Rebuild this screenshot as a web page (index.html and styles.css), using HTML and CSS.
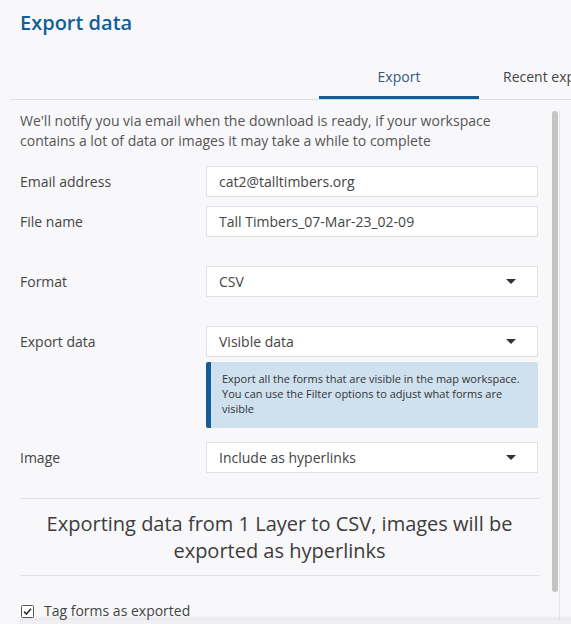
FILE: index.html
```html
<!DOCTYPE html>
<html lang="en">
<head>
    <meta charset="UTF-8">
    <title>Export data</title>
    <link rel="stylesheet" href="styles.css">
</head>
<body>
    <div class="modal">
        <h1 class="modal-title">Export data</h1>

        <!-- Tabs -->
        <ul class="tabs">
            <li class="tab tab-active">Export</li>
            <li class="tab">Recent exports</li>
        </ul>

        <!-- Export form -->
        <div class="panel">
            <div class="panel-body">
                <p class="intro">We'll notify you via email when the download is ready, if your workspace contains a lot of data or images it may take a while to complete</p>

                <div class="row">
                    <label class="row-label">Email address</label>
                    <div class="field">cat2@talltimbers.org</div>
                </div>
                <div class="row row-tight">
                    <label class="row-label">File name</label>
                    <div class="field">Tall Timbers_07-Mar-23_02-09</div>
                </div>

                <div class="row row-spaced">
                    <label class="row-label">Format</label>
                    <div class="field select">CSV <span class="caret"></span></div>
                </div>

                <div class="row row-spaced row-top">
                    <label class="row-label">Export data</label>
                    <div>
                        <div class="field select">Visible data <span class="caret"></span></div>
                        <div class="info">Export all the forms that are visible in the map workspace. You can use the Filter options to adjust what forms are visible</div>
                    </div>
                </div>

                <div class="row row-image">
                    <label class="row-label">Image</label>
                    <div class="field select">Include as hyperlinks <span class="caret"></span></div>
                </div>

                <div class="summary">Exporting data from 1 Layer to CSV, images will be exported as hyperlinks</div>

                <label class="check">
                    <svg class="check-box" width="13" height="13" viewBox="0 0 13 13">
                        <rect x="0.5" y="0.5" width="12" height="12" rx="1" fill="#fff" stroke="#555"/>
                        <path d="M3 6.6 L5.4 9 L10 3.8" fill="none" stroke="#333" stroke-width="1.6"/>
                    </svg>
                    Tag forms as exported
                </label>
            </div>
            <!-- scrollbar -->
            <div class="scrollbar"><div class="scroll-thumb"></div></div>
        </div>

        <div class="footer"></div>
    </div>
</body>
</html>
```

FILE: styles.css
```css
* { box-sizing: border-box; margin: 0; padding: 0; }
body {
    font-family: 'Open Sans', 'Noto Sans', sans-serif;
    font-size: 14px;
    line-height: 20px;
    background-color: #f8f8fa;
    color: #444;
    overflow: hidden;
}

.modal { width: 640px; }
.modal-title { padding: 10px 20px 0; font-size: 20px; line-height: 26px; font-weight: 600; color: #135e98; }

.tabs { display: flex; list-style: none; margin: 30px 0 0 10px; padding-left: 309px; border-bottom: 1px solid #dddde0; }
.tab { width: 160px; padding: 1px 24px 9px; border-bottom: 3px solid transparent; color: #444; white-space: nowrap; }
.tab-active { text-align: center; color: #34587c; border-bottom-color: #105d97; }

.panel { display: flex; margin: 10px 0 0 10px; width: 550px; height: 510px; overflow: hidden; border-right: 1px solid #e6e6e8; }
.panel-body { width: 540px; flex: none; padding: 1px 11px 29px 10px; }
.scrollbar { width: 9px; flex: none; padding: 1px 1px 0 2px; }
.scroll-thumb { height: 481px; background-color: #c4c4c4; border-radius: 3px; }

.intro { color: #555; }

.row { display: grid; grid-template-columns: 186px 332px; align-items: center; margin-top: 15px; }
.row-tight { margin-top: 9px; }
.row-spaced { margin-top: 29px; }
.row-top { align-items: start; }
.row-top .row-label { line-height: 31px; }
.row-image { margin-top: 14px; }
.row-label { color: #444; }

.field { height: 31px; padding: 5px 12px; background-color: #fff; border: 1px solid #e2e2e5; color: #444; }
.select { display: flex; justify-content: space-between; align-items: center; }
.caret { width: 0; height: 0; margin-right: 9px; border-left: 5px solid transparent; border-right: 5px solid transparent; border-top: 5px solid #333; }

.info { margin-top: 5px; padding: 9px 10px 12px 11px; background-color: #cfe1ef; border-left: 5px solid #105d97; border-radius: 2px; font-size: 11px; line-height: 15px; color: #333; }

.summary { margin-top: 25px; padding: 11px 0 11px; border-top: 1px solid #e2e2e5; border-bottom: 1px solid #e2e2e5; text-align: center; font-size: 20px; line-height: 27px; color: #3c3c3c; }

.check { display: flex; align-items: center; gap: 10px; margin-top: 25px; padding-left: 1px; color: #444; }
.check-box { flex: none; }

.footer { margin-left: 20px; height: 20px; background-color: #f0f0f2; box-shadow: 0 -2px 4px rgba(0, 0, 0, 0.08); position: relative; }
```
